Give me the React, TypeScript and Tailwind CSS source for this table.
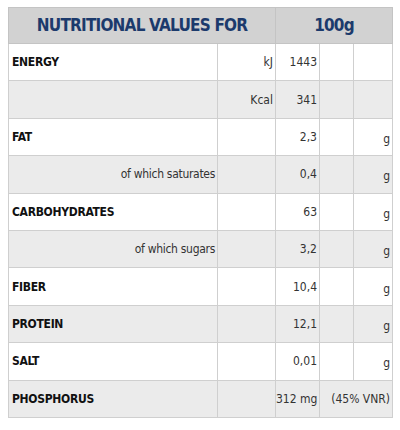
type Row = {
  label: string;
  sub?: boolean;
  unit?: string;
  value: string;
  g?: string;
  vnr?: string;
};

const rows: Row[] = [
  { label: "ENERGY", unit: "kJ", value: "1443" },
  { label: "", unit: "Kcal", value: "341" },
  { label: "FAT", value: "2,3", g: "g" },
  { label: "of which saturates", sub: true, value: "0,4", g: "g" },
  { label: "CARBOHYDRATES", value: "63", g: "g" },
  { label: "of which sugars", sub: true, value: "3,2", g: "g" },
  { label: "FIBER", value: "10,4", g: "g" },
  { label: "PROTEIN", value: "12,1", g: "g" },
  { label: "SALT", value: "0,01", g: "g" },
  { label: "PHOSPHORUS", value: "312 mg", vnr: "(45% VNR)" },
];

export default function App() {
  return (
    <div
      className="w-[400px] h-[430px] bg-white pt-[7px] pl-[8px]"
      style={{ fontFamily: '"DejaVu Sans Condensed", "Liberation Sans Narrow", sans-serif' }}
    >
      <table className="w-[384px] border-collapse table-fixed text-[#222]">
        <colgroup>
          <col className="w-[209px]" />
          <col className="w-[58px]" />
          <col className="w-[44px]" />
          <col className="w-[34px]" />
          <col className="w-[39px]" />
        </colgroup>
        <thead>
          <tr className="h-[36px] bg-[#d2d2d2]">
            <th
              colSpan={2}
              className="border border-[#c4c4c4] text-center text-[17px] font-bold text-[#1c3a6c] tracking-[-0.8px]"
            >
              NUTRITIONAL VALUES FOR
            </th>
            <th
              colSpan={3}
              className="border border-[#c4c4c4] text-center text-[17px] font-bold text-[#1c3a6c] tracking-[-0.8px]"
            >
              100g
            </th>
          </tr>
        </thead>
        <tbody>
          {rows.map((r, i) => (
            <tr key={i} className={`h-[37.4px] ${i % 2 === 0 ? "bg-white" : "bg-[#ebebeb]"}`}>
              <td
                className={
                  r.sub
                    ? "border border-[#cfcfcf] text-right pr-[2px] text-[12px] tracking-[-0.3px] text-[#333]"
                    : "border border-[#cfcfcf] pl-[3px] text-[12px] font-bold tracking-[-0.3px] text-[#111]"
                }
              >
                {r.label}
              </td>
              <td className="border border-[#cfcfcf] text-right pr-[2px] text-[12px] text-[#333]">
                {r.unit}
              </td>
              <td className="border border-[#cfcfcf] text-right pr-[2px] text-[12px] text-[#333] whitespace-nowrap">
                {r.value}
              </td>
              {r.vnr ? (
                <td
                  colSpan={2}
                  className="border border-[#cfcfcf] text-right pr-[2px] text-[12px] text-[#333] whitespace-nowrap"
                >
                  {r.vnr}
                </td>
              ) : (
                <>
                  <td className="border border-[#cfcfcf]"></td>
                  <td className="border border-[#cfcfcf] text-right pr-[2px] pt-[4px] text-[12px] text-[#333]">
                    {r.g}
                  </td>
                </>
              )}
            </tr>
          ))}
        </tbody>
      </table>
    </div>
  );
}
